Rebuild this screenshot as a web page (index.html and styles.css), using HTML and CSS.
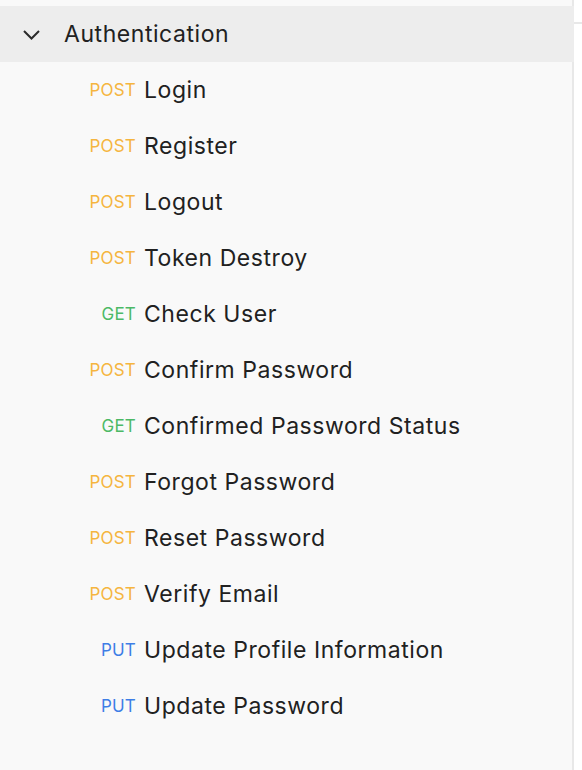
FILE: index.html
```html
<!DOCTYPE html>
<html>
<head>
<meta charset="utf-8">
<link rel="stylesheet" href="styles.css">
</head>
<body>
<div class="layout">
  <aside class="sidebar">
    <div class="folder">
      <svg class="chevron" width="17" height="10" viewBox="0 0 17 10"><path d="M1 1 L8.5 8.5 L16 1" fill="none" stroke="#2b2b2b" stroke-width="2"/></svg>
      <span class="folder-name">Authentication</span>
    </div>
    <ul class="requests">
      <li class="req"><span class="method post">POST</span><span class="name">Login</span></li>
      <li class="req"><span class="method post">POST</span><span class="name">Register</span></li>
      <li class="req"><span class="method post">POST</span><span class="name">Logout</span></li>
      <li class="req"><span class="method post">POST</span><span class="name">Token Destroy</span></li>
      <li class="req"><span class="method get">GET</span><span class="name">Check User</span></li>
      <li class="req"><span class="method post">POST</span><span class="name">Confirm Password</span></li>
      <li class="req"><span class="method get">GET</span><span class="name">Confirmed Password Status</span></li>
      <li class="req"><span class="method post">POST</span><span class="name">Forgot Password</span></li>
      <li class="req"><span class="method post">POST</span><span class="name">Reset Password</span></li>
      <li class="req"><span class="method post">POST</span><span class="name">Verify Email</span></li>
      <li class="req"><span class="method put">PUT</span><span class="name">Update Profile Information</span></li>
      <li class="req"><span class="method put">PUT</span><span class="name">Update Password</span></li>
    </ul>
  </aside>
  <main class="main">
    <div class="tabbar"></div>
  </main>
</div>
</body>
</html>
```
FILE: styles.css
```css
html, body {
  margin: 0;
  padding: 0;
  background: #ffffff;
  font-family: Inter, "Noto Sans", sans-serif;
}
.layout {
  display: flex;
  height: 770px;
}
.sidebar {
  width: 572px;
  flex: none;
  background: #f9f9f9;
  border-right: 2px solid #e8e8e8;
  padding-top: 6px;
  box-sizing: content-box;
}
.folder {
  display: flex;
  align-items: center;
  height: 56px;
  background: #ededed;
  margin-right: -2px;
}
.chevron {
  margin-left: 23px;
  margin-top: 1px;
}
.folder-name {
  margin-left: 24px;
  font-size: 23px;
  letter-spacing: 0.55px;
  color: #212121;
}
.requests {
  list-style: none;
  margin: 0;
  padding: 0;
}
.req {
  display: flex;
  align-items: center;
  height: 56px;
}
.method {
  width: 145px;
  flex: none;
  text-align: right;
  font-size: 17px;
  letter-spacing: 0.2px;
  padding-right: 9px;
  box-sizing: border-box;
}
.post { color: #f5b53f; }
.get { color: #4cb966; }
.put { color: #3e7ee6; }
.name {
  font-size: 23px;
  letter-spacing: 0.55px;
  color: #212121;
  margin-left: -1px;
}
.main {
  flex: 1;
}
.tabbar {
  height: 22px;
  border-bottom: 2px solid #e8e8e8;
}
```
